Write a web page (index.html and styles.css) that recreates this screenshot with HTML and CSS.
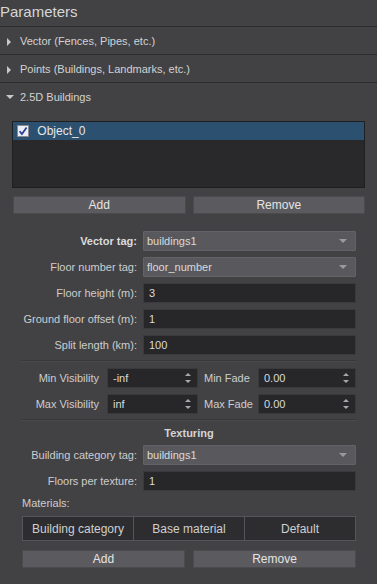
FILE: index.html
```html
<!DOCTYPE html>
<html>
<head>
    <title>Parameters</title>
    <link rel="stylesheet" href="styles.css">
</head>
<body>
    <div class="panel">
        <div class="title">Parameters</div>

        <div class="section"><span class="arrow-right"></span>Vector (Fences, Pipes, etc.)</div>
        <div class="section"><span class="arrow-right"></span>Points (Buildings, Landmarks, etc.)</div>
        <div class="section open"><span class="arrow-down"></span>2.5D Buildings</div>

        <div class="content">
            <div class="list">
                <div class="list-item selected">
                    <span class="check">
                        <svg width="12" height="12" viewBox="0 0 12 12">
                            <rect x="0.5" y="0.5" width="11" height="11" fill="#eceef4" stroke="#8a8a90"/>
                            <path d="M2.6 6.2 L4.9 9 L9.6 2.4" fill="none" stroke="#2b3f9a" stroke-width="1.8"/>
                        </svg>
                    </span>
                    Object_0
                </div>
            </div>
            <div class="btn-row top-btns">
                <button class="btn">Add</button>
                <button class="btn">Remove</button>
            </div>

            <div class="form">
                <div class="fields">
                    <label class="bold">Vector tag:</label>
                    <div class="combo">buildings1<span class="combo-arrow"></span></div>

                    <label>Floor number tag:</label>
                    <div class="combo">floor_number<span class="combo-arrow"></span></div>

                    <label>Floor height (m):</label>
                    <div class="input">3</div>

                    <label>Ground floor offset (m):</label>
                    <div class="input">1</div>

                    <label>Split length (km):</label>
                    <div class="input">100</div>
                </div>

                <hr class="sep">

                <div class="vis">
                    <label>Min Visibility</label>
                    <div class="input spin">-inf<span class="spin-arrows"><i class="up"></i><i class="down"></i></span></div>
                    <label class="left">Min Fade</label>
                    <div class="input spin">0.00<span class="spin-arrows"><i class="up"></i><i class="down"></i></span></div>

                    <label>Max Visibility</label>
                    <div class="input spin">inf<span class="spin-arrows"><i class="up"></i><i class="down"></i></span></div>
                    <label class="left">Max Fade</label>
                    <div class="input spin">0.00<span class="spin-arrows"><i class="up"></i><i class="down"></i></span></div>
                </div>

                <hr class="sep sep2">

                <div class="subhead">Texturing</div>

                <div class="fields">
                    <label>Building category tag:</label>
                    <div class="combo">buildings1<span class="combo-arrow"></span></div>

                    <label>Floors per texture:</label>
                    <div class="input">1</div>
                </div>

                <div class="materials">Materials:</div>
                <table class="mat-table">
                    <tr>
                        <th>Building category</th>
                        <th>Base material</th>
                        <th>Default</th>
                    </tr>
                </table>

                <div class="btn-row bottom-btns">
                    <button class="btn">Add</button>
                    <button class="btn">Remove</button>
                </div>
            </div>
        </div>
    </div>
</body>
</html>
```

FILE: styles.css
```css
body {
    margin: 0;
    background-color: #424245;
    font-family: "Liberation Sans", Arial, sans-serif;
    font-size: 11px;
    color: #cfcfcf;
}

.panel {
    width: 377px;
    height: 584px;
    overflow: hidden;
}

.title {
    height: 26px;
    line-height: 23px;
    font-size: 15px;
    color: #d6d6d6;
    border-bottom: 1px solid #2c2c2e;
}

.section {
    height: 27px;
    line-height: 28px;
    padding-left: 7px;
    border-bottom: 1px solid #2c2c2e;
    color: #d2d2d2;
}

.section.open {
    border-bottom: none;
}

.arrow-right {
    display: inline-block;
    width: 0;
    height: 0;
    border-top: 4px solid transparent;
    border-bottom: 4px solid transparent;
    border-left: 4px solid #c8c8c8;
    margin-right: 9px;
    vertical-align: -1px;
}

.arrow-down {
    display: inline-block;
    width: 0;
    height: 0;
    border-left: 4px solid transparent;
    border-right: 4px solid transparent;
    border-top: 4px solid #c8c8c8;
    margin-right: 6px;
    margin-left: -1px;
    vertical-align: 2px;
}

.content {
    padding: 11px 12px 0 12px;
}

.list {
    height: 65px;
    background-color: #29292c;
    border: 1px solid #1f1f21;
}

.list-item {
    height: 18px;
    line-height: 18px;
    font-size: 12px;
    padding-left: 4px;
    color: #e6e6e6;
}

.list-item.selected {
    background-color: #2c5170;
}

.check {
    display: inline-block;
    vertical-align: -2px;
    margin-right: 5px;
}

.check svg {
    display: block;
}

.btn-row {
    display: grid;
    grid-template-columns: 1fr 1fr;
    column-gap: 7px;
}

.top-btns {
    margin-top: 8px;
    padding-left: 1px;
}

.btn {
    height: 18px;
    padding: 0;
    background-color: #5b5b5f;
    border: 1px solid #4b4b4e;
    border-radius: 1px;
    color: #e4e4e4;
    font-family: "Liberation Sans", Arial, sans-serif;
    font-size: 12px;
}

.form {
    padding: 17px 9px 0 10px;
}

.fields {
    display: grid;
    grid-template-columns: 115px 1fr;
    column-gap: 6px;
    row-gap: 6px;
}

.fields label,
.vis label {
    text-align: right;
    line-height: 20px;
    color: #cdcdcd;
}

.bold {
    font-weight: bold;
    color: #dcdcdc !important;
}

.combo {
    position: relative;
    height: 18px;
    line-height: 18px;
    padding-left: 3px;
    background-color: #59595d;
    border: 1px solid #636367;
    border-radius: 1px;
    color: #dadada;
}

.combo-arrow {
    position: absolute;
    right: 8px;
    top: 7px;
    width: 0;
    height: 0;
    border-left: 4px solid transparent;
    border-right: 4px solid transparent;
    border-top: 4px solid #9a9a9e;
}

.input {
    position: relative;
    height: 18px;
    line-height: 18px;
    padding-left: 5px;
    background-color: #27272a;
    border: 1px solid #3a3a3d;
    color: #dadada;
}

.sep {
    border: none;
    border-top: 1px solid #37373a;
    border-bottom: 1px solid #4a4a4d;
    margin: 5px 0 6px 0;
    height: 0;
}

.sep2 {
    margin: 5px 0 0 0;
}

.vis {
    display: grid;
    grid-template-columns: 85px 91px 60px 98px;
    row-gap: 6px;
}

.vis label {
    padding-right: 8px;
}

.vis label.left {
    text-align: left;
    padding-left: 6px;
    padding-right: 0;
}

.spin-arrows i {
    position: absolute;
    right: 6px;
    width: 0;
    height: 0;
    border-left: 3px solid transparent;
    border-right: 3px solid transparent;
}

.spin-arrows .up {
    top: 4px;
    border-bottom: 3px solid #a8a8ac;
}

.spin-arrows .down {
    bottom: 4px;
    border-top: 3px solid #a8a8ac;
}

.subhead {
    text-align: center;
    font-weight: bold;
    font-size: 11px;
    line-height: 24px;
    color: #d4d4d4;
}

.materials {
    margin-top: 4px;
    line-height: 16px;
    color: #cdcdcd;
}

.mat-table {
    margin-top: 5px;
    width: 100%;
    border-collapse: collapse;
    border: 1px solid #767679;
}

.mat-table th {
    height: 23px;
    padding: 0;
    font-weight: normal;
    font-size: 12px;
    color: #cfcfcf;
    background-color: #2d2d30;
    border: 1px solid #56565a;
    width: 33.3%;
}

.bottom-btns {
    margin-top: 9px;
    column-gap: 8px;
}
```
